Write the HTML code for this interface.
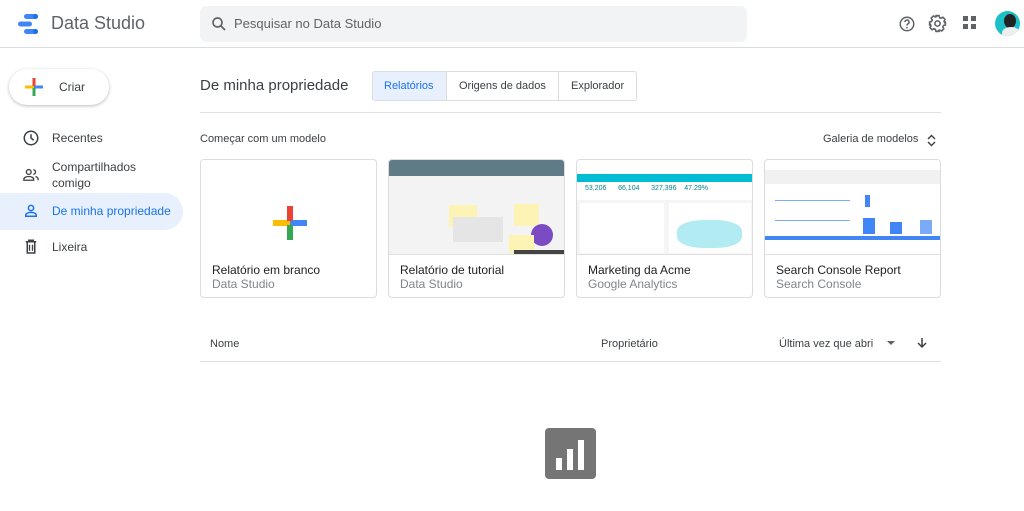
<!DOCTYPE html>
<html><head><meta charset="utf-8"><style>
*{box-sizing:border-box;margin:0;padding:0}
body{width:1024px;height:511px;overflow:hidden;background:#fff;font-family:"Liberation Sans",Arial,sans-serif;color:#3c4043;position:relative}
.a{position:absolute}
.hdr{left:0;top:0;width:1024px;height:48px;border-bottom:1px solid #dadce0}
.card{position:absolute;top:159px;width:177px;height:139px;border:1px solid #dadce0;border-radius:4px;overflow:hidden;background:#fff}
.card .th{position:absolute;left:0;top:0;width:100%;height:95px;border-bottom:1px solid #e0e0e0;background:#f5f5f5}
.card .t{position:absolute;left:11px;top:103px;font-size:12px;color:#202124}
.card .s{position:absolute;left:11px;top:117px;font-size:12px;color:#80868b}
.nav{position:absolute;left:52px;font-size:12px;color:#3c4043}
</style></head><body>
<div class="a hdr"></div>
<svg class="a" style="left:18px;top:13px" width="22" height="22" viewBox="0 0 22 22"><rect x="6" y="1" width="14" height="5" rx="2.5" fill="#4285f4"/><rect x="0" y="8.5" width="14" height="5" rx="2.5" fill="#4285f4"/><rect x="6" y="16" width="14" height="5" rx="2.5" fill="#4285f4"/><circle cx="17.5" cy="3.5" r="2.5" fill="#1a73e8"/><circle cx="17.5" cy="18.5" r="2.5" fill="#1a73e8"/></svg>
<div class="a" style="left:51px;top:13px;font-size:18px;color:#5f6368">Data Studio</div>
<div class="a" style="left:200px;top:6px;width:547px;height:36px;background:#f1f3f4;border-radius:6px"></div>
<svg class="a" style="left:210px;top:15px" width="18" height="18" viewBox="0 0 24 24"><circle cx="10" cy="10" r="6" fill="none" stroke="#5f6368" stroke-width="2.2"/><path d="M14.5 14.5L20 20" stroke="#5f6368" stroke-width="2.4"/></svg>
<div class="a" style="left:234px;top:16px;font-size:13px;color:#5f6368">Pesquisar no Data Studio</div>
<svg class="a" style="left:898px;top:15px" width="18" height="18" viewBox="0 0 24 24"><circle cx="12" cy="12" r="9" fill="none" stroke="#5f6368" stroke-width="2"/><path d="M9.3 9.5a2.7 2.7 0 1 1 3.8 2.4c-.8.4-1.1 1-1.1 1.8v.5" fill="none" stroke="#5f6368" stroke-width="2"/><circle cx="12" cy="17" r="1.2" fill="#5f6368"/></svg>
<svg class="a" style="left:928px;top:14px" width="19" height="19" viewBox="0 0 24 24"><path d="M10 2h4l.6 2.6 1.9.8 2.3-1.4 2.8 2.8-1.4 2.3.8 1.9L22 10v4l-2.6.6-.8 1.9 1.4 2.3-2.8 2.8-2.3-1.4-1.9.8L14 22h-4l-.6-2.6-1.9-.8-2.3 1.4-2.8-2.8 1.4-2.3-.8-1.9L2 14v-4l2.6-.6.8-1.9L4 5.2 6.8 2.4l2.3 1.4 1.9-.8z" fill="none" stroke="#5f6368" stroke-width="2" stroke-linejoin="round"/><circle cx="12" cy="12" r="3.3" fill="none" stroke="#5f6368" stroke-width="2"/></svg>
<svg class="a" style="left:963px;top:16px" width="14" height="14"><rect x="0" y="0" width="5" height="5" fill="#5f6368"/><rect x="8" y="0" width="5" height="5" fill="#5f6368"/><rect x="0" y="8" width="5" height="5" fill="#5f6368"/><rect x="8" y="8" width="5" height="5" fill="#5f6368"/></svg>
<div class="a" style="left:995px;top:11px;width:25px;height:25px;border-radius:50%;background:#1ec0c8;overflow:hidden"><div class="a" style="left:9px;top:3px;width:12px;height:14px;border-radius:50%;background:#222"></div><div class="a" style="left:7px;top:16px;width:18px;height:12px;border-radius:50%;background:#eee"></div></div>
<div class="a" style="left:9px;top:69px;width:100px;height:36px;border-radius:18px;box-shadow:0 1px 3px rgba(60,64,67,.35);background:#fff"></div>
<svg class="a" style="left:25px;top:78px" width="18" height="18"><rect x="0" y="7.5" width="9" height="3" fill="#fbbc04"/><rect x="9" y="7.5" width="9" height="3" fill="#4285f4"/><rect x="7.5" y="0" width="3" height="8" fill="#ea4335"/><rect x="7.5" y="10" width="3" height="8" fill="#34a853"/></svg>
<div class="a" style="left:59px;top:80px;font-size:12px;color:#3c4043">Criar</div>
<div class="a" style="left:0;top:193px;width:183px;height:37px;background:#e8f0fe;border-radius:0 19px 19px 0"></div>
<svg class="a" style="left:22px;top:129px" width="18" height="18" viewBox="0 0 24 24"><circle cx="12" cy="12" r="9" fill="none" stroke="#3c4043" stroke-width="2"/><path d="M12 7v5l3.5 3" fill="none" stroke="#3c4043" stroke-width="2"/></svg>
<div class="nav" style="top:131px">Recentes</div>
<svg class="a" style="left:22px;top:166px" width="18" height="18" viewBox="0 0 24 24"><circle cx="9" cy="8" r="3.2" fill="none" stroke="#3c4043" stroke-width="1.8"/><path d="M2.5 19v-1.5c0-2 3-3.5 6.5-3.5s6.5 1.5 6.5 3.5V19z" fill="none" stroke="#3c4043" stroke-width="1.8"/><path d="M15 5a3 3 0 0 1 0 6M18 14c2 .7 3.5 1.8 3.5 3.5V19" fill="none" stroke="#3c4043" stroke-width="1.8"/></svg>
<div class="nav" style="top:159px;line-height:16px">Compartilhados<br>comigo</div>
<svg class="a" style="left:22px;top:202px" width="18" height="18" viewBox="0 0 24 24"><circle cx="12" cy="8" r="3.5" fill="none" stroke="#1a73e8" stroke-width="2"/><path d="M5 19v-1.5c0-2.2 3.5-3.7 7-3.7s7 1.5 7 3.7V19z" fill="none" stroke="#1a73e8" stroke-width="2"/></svg>
<div class="nav" style="top:204px;color:#1a73e8">De minha propriedade</div>
<svg class="a" style="left:22px;top:238px" width="18" height="18" viewBox="0 0 24 24"><path d="M5 5h14M9 5V3h6v2M7 6v14h10V6" fill="none" stroke="#3c4043" stroke-width="2"/><path d="M10 9v8M14 9v8" stroke="#3c4043" stroke-width="1.8"/></svg>
<div class="nav" style="top:240px">Lixeira</div>
<div class="a" style="left:200px;top:77px;font-size:15px;color:#3c4043">De minha propriedade</div>
<div class="a" style="left:372px;top:71px;width:265px;height:30px;border:1px solid #dadce0;border-radius:3px"></div>
<div class="a" style="left:373px;top:72px;width:74px;height:28px;background:#e8f0fe;border-right:1px solid #dadce0"></div>
<div class="a" style="left:558px;top:72px;width:1px;height:28px;background:#dadce0"></div>
<div class="a" style="left:384px;top:80px;font-size:11px;color:#1a73e8">Relatórios</div>
<div class="a" style="left:459px;top:80px;font-size:11px;color:#3c4043">Origens de dados</div>
<div class="a" style="left:571px;top:80px;font-size:11px;color:#3c4043">Explorador</div>
<div class="a" style="left:200px;top:112px;width:741px;height:1px;background:#e0e0e0"></div>
<div class="a" style="left:200px;top:133px;font-size:11px;color:#3c4043">Começar com um modelo</div>
<div class="a" style="left:823px;top:133px;font-size:11px;color:#3c4043">Galeria de modelos</div>
<svg class="a" style="left:927px;top:134px" width="9" height="13"><path d="M1 5l3.5-3.5L8 5M1 8l3.5 3.5L8 8" fill="none" stroke="#3c4043" stroke-width="1.4"/></svg>
<div class="card" style="left:200px"><div class="th" style="background:#fff;border:none"></div>
<svg class="a" style="left:72px;top:46px" width="34" height="34"><rect x="0" y="14" width="17" height="6" fill="#fbbc04"/><rect x="17" y="14" width="17" height="6" fill="#4285f4"/><rect x="14" y="0" width="6" height="15" fill="#ea4335"/><rect x="14" y="19" width="6" height="15" fill="#34a853"/></svg>
<div class="t">Relatório em branco</div><div class="s">Data Studio</div></div>
<div class="card" style="left:388px"><div class="th" style="background:#f3f3f3"><div class="a" style="left:0;top:0;width:177px;height:16px;background:#5f7b88"></div>
<div class="a" style="left:60px;top:45px;width:28px;height:22px;background:#fdf3b5"></div><div class="a" style="left:125px;top:44px;width:25px;height:22px;background:#fdf3b5"></div>
<div class="a" style="left:64px;top:57px;width:50px;height:25px;background:#e5e5e5"></div><div class="a" style="left:142px;top:64px;width:22px;height:22px;border-radius:50%;background:#7b4bc4"></div><div class="a" style="left:120px;top:75px;width:25px;height:18px;background:#fdf3b5"></div><div class="a" style="left:125px;top:90px;width:50px;height:4px;background:#444"></div></div>
<div class="t">Relatório de tutorial</div><div class="s">Data Studio</div></div>
<div class="card" style="left:576px"><div class="th" style="background:#f5f5f5"><div class="a" style="left:0;top:0;width:177px;height:14px;background:#fff"></div><div class="a" style="left:0;top:14px;width:177px;height:8px;background:#00bcd4"></div>
<div class="a" style="left:0;top:22px;width:177px;height:18px;background:#fff"></div><div class="a" style="left:8px;top:25px;font-size:7px;color:#00838f">53,206 &nbsp;&nbsp;&nbsp;&nbsp; 66,104 &nbsp;&nbsp;&nbsp;&nbsp; 327,396 &nbsp;&nbsp; 47.29%</div>
<div class="a" style="left:3px;top:43px;width:84px;height:50px;background:#fff"></div><div class="a" style="left:92px;top:43px;width:82px;height:50px;background:#fff"></div><div class="a" style="left:100px;top:60px;width:65px;height:28px;background:#b2ebf2;border-radius:40%"></div></div>
<div class="t">Marketing da Acme</div><div class="s">Google Analytics</div></div>
<div class="card" style="left:764px"><div class="th" style="background:#fff"><div class="a" style="left:0;top:10px;width:177px;height:14px;background:#f1f1f1"></div><div class="a" style="left:100px;top:35px;width:5px;height:12px;background:#4285f4"></div><div class="a" style="left:98px;top:58px;width:12px;height:16px;background:#4285f4"></div><div class="a" style="left:125px;top:62px;width:12px;height:12px;background:#4285f4"></div><div class="a" style="left:155px;top:60px;width:12px;height:14px;background:#7baaf7"></div><div class="a" style="left:0;top:76px;width:177px;height:4px;background:#4285f4"></div><div class="a" style="left:10px;top:40px;width:75px;height:1px;background:#7baaf7"></div><div class="a" style="left:10px;top:60px;width:75px;height:1px;background:#7baaf7"></div></div>
<div class="t">Search Console Report</div><div class="s">Search Console</div></div>
<div class="a" style="left:210px;top:338px;font-size:11px;color:#3c4043">Nome</div>
<div class="a" style="left:601px;top:338px;font-size:11px;color:#3c4043">Proprietário</div>
<div class="a" style="left:779px;top:338px;font-size:11px;color:#3c4043">Última vez que abri</div>
<svg class="a" style="left:887px;top:341px" width="8" height="5"><path d="M0 0h8L4 4z" fill="#5f6368"/></svg>
<svg class="a" style="left:916px;top:337px" width="12" height="12" viewBox="0 0 12 12"><path d="M6 1v9M2 6l4 4 4-4" fill="none" stroke="#3c4043" stroke-width="1.5"/></svg>
<div class="a" style="left:200px;top:361px;width:741px;height:1px;background:#e0e0e0"></div>
<div class="a" style="left:545px;top:428px;width:51px;height:51px;background:#757575;border-radius:4px"></div>
<div class="a" style="left:556px;top:458px;width:6px;height:12px;background:#fff"></div>
<div class="a" style="left:567px;top:449px;width:6px;height:21px;background:#fff"></div>
<div class="a" style="left:578px;top:440px;width:6px;height:30px;background:#fff"></div>
</body></html>
